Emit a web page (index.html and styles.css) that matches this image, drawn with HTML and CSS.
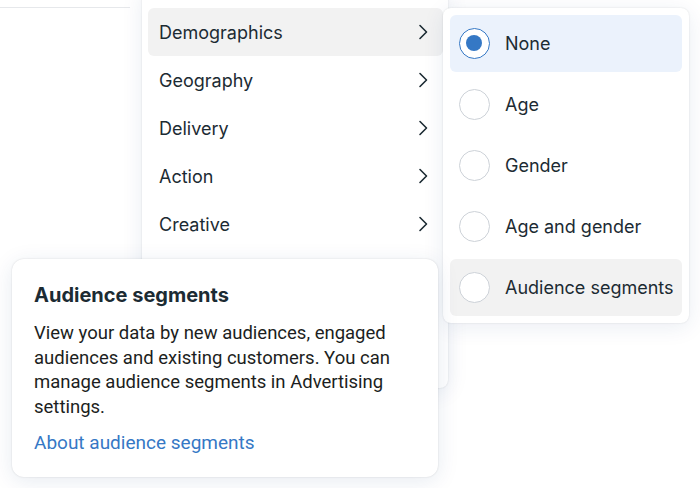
FILE: index.html
```html
<!DOCTYPE html>
<html lang="en">
  <head>
    <meta charset="UTF-8" />
    <title>Breakdown menu</title>
    <link rel="stylesheet" href="styles.css">
  </head>
  <body>
    <div class="canvas">
      <div class="topline"></div>

      <div class="menu">
        <div class="menu-item active">
          <span>Demographics</span>
          <svg class="chevron" width="12" height="16" viewBox="0 0 12 16"><path d="M3 1.5 9.5 8 3 14.5" /></svg>
        </div>
        <div class="menu-item">
          <span>Geography</span>
          <svg class="chevron" width="12" height="16" viewBox="0 0 12 16"><path d="M3 1.5 9.5 8 3 14.5" /></svg>
        </div>
        <div class="menu-item">
          <span>Delivery</span>
          <svg class="chevron" width="12" height="16" viewBox="0 0 12 16"><path d="M3 1.5 9.5 8 3 14.5" /></svg>
        </div>
        <div class="menu-item">
          <span>Action</span>
          <svg class="chevron" width="12" height="16" viewBox="0 0 12 16"><path d="M3 1.5 9.5 8 3 14.5" /></svg>
        </div>
        <div class="menu-item">
          <span>Creative</span>
          <svg class="chevron" width="12" height="16" viewBox="0 0 12 16"><path d="M3 1.5 9.5 8 3 14.5" /></svg>
        </div>
      </div>

      <div class="options">
        <div class="option selected">
          <span class="radio"></span>
          <span>None</span>
        </div>
        <div class="option">
          <span class="radio"></span>
          <span>Age</span>
        </div>
        <div class="option">
          <span class="radio"></span>
          <span>Gender</span>
        </div>
        <div class="option">
          <span class="radio"></span>
          <span>Age and gender</span>
        </div>
        <div class="option hover">
          <span class="radio"></span>
          <span>Audience segments</span>
        </div>
      </div>

      <div class="tooltip">
        <h2>Audience segments</h2>
        <p>View your data by new audiences, engaged audiences and existing customers. You can manage audience segments in Advertising settings.</p>
        <a href="#">About audience segments</a>
      </div>
    </div>
  </body>
</html>
```

FILE: styles.css
```css
* {
  box-sizing: border-box;
  margin: 0;
  padding: 0;
}
body {
  font-family: "Inter", "Roboto", sans-serif;
  background: #ffffff;
  color: #1c2b33;
}
.canvas {
  position: relative;
  width: 700px;
  height: 488px;
  overflow: hidden;
}
.topline {
  height: 8px;
  width: 130px;
  border-bottom: 1px solid #e6e8eb;
}
.menu {
  position: absolute;
  left: 142px;
  top: -12px;
  width: 306px;
  height: 400px;
  padding: 20px 5px 6px 6px;
  background: white;
  border-radius: 8px;
  box-shadow: 0 0 2px rgba(0, 0, 0, 0.12), 0 4px 22px rgba(20, 60, 120, 0.09);
}
.menu-item {
  display: flex;
  justify-content: space-between;
  align-items: center;
  height: 48px;
  padding: 0 14px 0 11px;
  border-radius: 6px;
  font-size: 18px;
}
.menu-item.active {
  background: #f2f2f2;
}
.chevron path {
  fill: none;
  stroke: #1c2b33;
  stroke-width: 1.6;
  stroke-linecap: round;
  stroke-linejoin: round;
}
.options {
  position: absolute;
  left: 443px;
  top: 8px;
  width: 246px;
  padding: 7px;
  display: flex;
  flex-direction: column;
  gap: 4px;
  background: white;
  border-radius: 8px;
  box-shadow: 0 0 2px rgba(0, 0, 0, 0.12), 0 4px 22px rgba(20, 60, 120, 0.09);
}
.option {
  display: flex;
  align-items: center;
  gap: 15px;
  height: 57px;
  padding-left: 9px;
  border-radius: 6px;
  font-size: 18px;
}
.option.selected {
  background: #ebf2fc;
}
.option.hover {
  background: #f2f2f2;
}
.radio {
  flex: 0 0 31px;
  width: 31px;
  height: 31px;
  border-radius: 50%;
  border: 1.5px solid #cdd2d8;
  background: white;
  position: relative;
}
.option.selected .radio {
  border: 1.5px solid #3578c5;
}
.option.selected .radio::after {
  content: "";
  position: absolute;
  left: 6px;
  top: 6px;
  width: 16px;
  height: 16px;
  border-radius: 50%;
  background: #3578c5;
}
.tooltip {
  position: absolute;
  left: 12px;
  top: 259px;
  width: 426px;
  height: 218px;
  padding: 22px 22px 0 22px;
  background: white;
  border-radius: 12px;
  box-shadow: 0 0 2px rgba(0, 0, 0, 0.14), 0 4px 22px rgba(20, 60, 120, 0.1);
}
.tooltip h2 {
  font-family: "Inter", sans-serif;
  font-size: 20px;
  font-weight: 700;
  line-height: 28px;
  margin-bottom: 12px;
}
.tooltip p {
  font-family: "Roboto", sans-serif;
  font-size: 18.5px;
  line-height: 24.5px;
  color: #1c1e21;
  margin-bottom: 12px;
}
.tooltip a {
  font-family: "Roboto", sans-serif;
  font-size: 19px;
  line-height: 24px;
  color: #3578c5;
  text-decoration: none;
}
```
